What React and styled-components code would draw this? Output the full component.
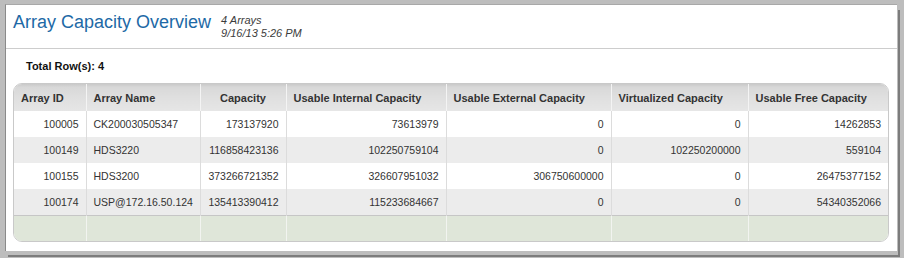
import styled, { createGlobalStyle } from "styled-components";

const columns = [
  { key: "id", label: "Array ID", width: 72, align: "right", head: "left" },
  { key: "name", label: "Array Name", width: 114, align: "left", head: "left" },
  { key: "capacity", label: "Capacity", width: 86, align: "right", head: "center" },
  { key: "internal", label: "Usable Internal Capacity", width: 160, align: "right", head: "left" },
  { key: "external", label: "Usable External Capacity", width: 165, align: "right", head: "left" },
  { key: "virtualized", label: "Virtualized Capacity", width: 137, align: "right", head: "left" },
  { key: "free", label: "Usable Free Capacity", width: 140, align: "right", head: "left" },
];

const rows = [
  { id: "100005", name: "CK200030505347", capacity: "173137920", internal: "73613979", external: "0", virtualized: "0", free: "14262853" },
  { id: "100149", name: "HDS3220", capacity: "116858423136", internal: "102250759104", external: "0", virtualized: "102250200000", free: "559104" },
  { id: "100155", name: "HDS3200", capacity: "373266721352", internal: "326607951032", external: "306750600000", virtualized: "0", free: "26475377152" },
  { id: "100174", name: "USP@172.16.50.124", capacity: "135413390412", internal: "115233684667", external: "0", virtualized: "0", free: "54340352066" },
];

const GlobalStyle = createGlobalStyle`
  html, body {
    margin: 0;
    padding: 0;
    background: #bdbdbd;
  }
  body {
    font-family: "Liberation Sans", Arial, sans-serif;
  }
`;

const Page = styled.div`
  width: 904px;
  height: 258px;
  box-sizing: border-box;
  padding: 4px 7px 7px 5px;
  background: #bdbdbd;
  overflow: hidden;
`;

const Panel = styled.section`
  height: 100%;
  box-sizing: border-box;
  background: #fff;
  border-left: 1px solid #8a8a8a;
  border-top: 1px solid #a8a8a8;
  box-shadow: 1px 4px 0 #bdbdbd, 3px 6px 0 #7c7c7c;
  display: flex;
  flex-direction: column;
`;

const Header = styled.header`
  height: 44px;
  box-sizing: border-box;
  padding: 7px 7px 0;
  border-bottom: 1px solid #cdcdcd;
  display: flex;
  align-items: flex-start;
  gap: 10px;
`;

const Title = styled.h1`
  margin: 0;
  font-size: 18px;
  line-height: 21px;
  font-weight: normal;
  color: #1d69a6;
`;

const Meta = styled.div`
  margin-top: 2px;
  font-size: 11px;
  line-height: 12.5px;
  font-style: italic;
  color: #3c3c3c;
`;

const Total = styled.div`
  margin: 11px 0 0 20px;
  font-size: 11px;
  line-height: 13px;
  font-weight: bold;
  color: #111;
`;

const TableWrap = styled.div`
  margin: 10px 8px 0 7px;
  border: 1px solid #c9c9c9;
  border-radius: 9px;
  overflow: hidden;
`;

const Table = styled.table`
  width: 874px;
  table-layout: fixed;
  border-collapse: collapse;
  font-size: 10.5px;
  color: #333;
`;

const Th = styled.th`
  height: 27px;
  padding: 0 7px;
  box-sizing: border-box;
  text-align: ${({ $align }) => $align};
  font-size: 11px;
  font-weight: bold;
  color: #333;
  background: linear-gradient(#c9c9c9 0, #d8d8d8 12%, #e0e0e0 55%, #e6e6e6 100%);
  border-right: 1px solid #f4f4f4;
  white-space: nowrap;
  &:last-child {
    border-right: none;
  }
`;

const Tr = styled.tr`
  background: ${({ $alt }) => ($alt ? "#ececec" : "#fff")};
`;

const Td = styled.td`
  height: 26px;
  padding: 0 7px;
  box-sizing: border-box;
  text-align: ${({ $align }) => $align};
  border-right: 1px solid #dcdcdc;
  white-space: nowrap;
  &:last-child {
    border-right: none;
  }
`;

const FooterCell = styled.td`
  height: 26px;
  box-sizing: border-box;
  background: #dfe6d9;
  border-top: 1px solid #c6c6c6;
  border-right: 1px solid #f2f4f0;
  &:last-child {
    border-right: none;
  }
`;

export default function App() {
  return (
    <Page>
      <GlobalStyle />
      <Panel>
        <Header>
          <Title>Array Capacity Overview</Title>
          <Meta>
            <div>4 Arrays</div>
            <div>9/16/13 5:26 PM</div>
          </Meta>
        </Header>
        <Total>Total Row(s): 4</Total>
        <TableWrap>
          <Table>
            <colgroup>
              {columns.map((c) => (
                <col key={c.key} style={{ width: c.width }} />
              ))}
            </colgroup>
            <thead>
              <tr>
                {columns.map((c) => (
                  <Th key={c.key} $align={c.head}>
                    {c.label}
                  </Th>
                ))}
              </tr>
            </thead>
            <tbody>
              {rows.map((r, i) => (
                <Tr key={r.id} $alt={i % 2 === 1}>
                  {columns.map((c) => (
                    <Td key={c.key} $align={c.align}>
                      {r[c.key]}
                    </Td>
                  ))}
                </Tr>
              ))}
              <tr>
                {columns.map((c) => (
                  <FooterCell key={c.key} />
                ))}
              </tr>
            </tbody>
          </Table>
        </TableWrap>
      </Panel>
    </Page>
  );
}
